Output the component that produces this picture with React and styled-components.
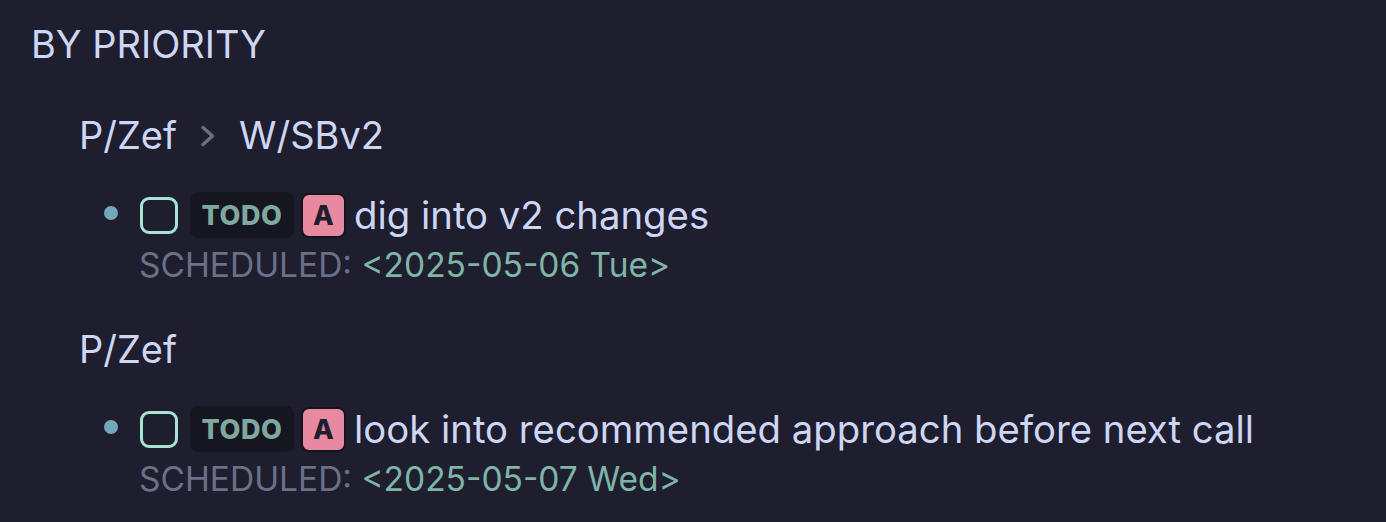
import React from "react";
import styled, { createGlobalStyle } from "styled-components";

const Global = createGlobalStyle`
  html, body { margin: 0; padding: 0; background: #1e1e2e; }
  body { font-family: Inter, "Noto Sans", sans-serif; color: #cdd6f4; }
`;

const Page = styled.div`
  width: 1386px;
  height: 522px;
  box-sizing: border-box;
  padding: 21px 0 0 31px;
  background: #1e1e2e;
  overflow: hidden;
`;

const Heading = styled.h2`
  margin: 0;
  font-size: 38px;
  font-weight: 400;
  line-height: 46px;
  color: #cdd6f4;
`;

const Group = styled.section`
  margin-top: ${(p) => p.$top}px;
  padding-left: 48px;
`;

const GroupTitle = styled.div`
  display: flex;
  align-items: center;
  gap: 23px;
  font-size: 38px;
  line-height: 46px;
  color: #cdd6f4;
`;

const Chevron = styled.svg`
  width: 16px;
  height: 24px;
  margin-top: 2px;
  color: #6c7086;
`;

const Task = styled.div`
  margin-top: 34px;
  padding-left: 25px;
`;

const TaskRow = styled.div`
  display: flex;
  align-items: center;
  height: 46px;
`;

const Bullet = styled.span`
  width: 14px;
  height: 14px;
  border-radius: 50%;
  background: #74a7b9;
  margin: 0 22px 4px 0;
`;

const Checkbox = styled.span`
  box-sizing: border-box;
  width: 38px;
  height: 37px;
  border: 3.5px solid #a6e3d5;
  border-radius: 9px;
  margin-right: 12px;
`;

const TodoBadge = styled.span`
  display: flex;
  align-items: center;
  justify-content: center;
  width: 104px;
  height: 46px;
  border-radius: 8px;
  background: #161621;
  color: #7fa99f;
  font-size: 27px;
  font-weight: 800;
  letter-spacing: 0.6px;
  margin-right: 7px;
`;

const PriorityBadge = styled.span`
  box-sizing: border-box;
  display: flex;
  align-items: center;
  justify-content: center;
  width: 45px;
  height: 45px;
  border-radius: 8px;
  background: #e78aa0;
  border: 2px solid #151520;
  color: #1e1e2e;
  font-size: 27px;
  font-weight: 800;
  margin-right: 8px;
`;

const TaskText = styled.span`
  font-size: 38.3px;
  line-height: 46px;
  color: #cdd6f4;
  white-space: nowrap;
`;

const Scheduled = styled.div`
  padding-left: 35px;
  margin-top: 7px;
  font-size: 33.5px;
  line-height: 40px;
  color: #6c7086;
  white-space: nowrap;
`;

const DateText = styled.span`
  color: #7fb5a6;
`;

const ChevronIcon = () => (
  <Chevron viewBox="0 0 16 24" fill="none" stroke="currentColor" strokeWidth="3.4" strokeLinecap="round" strokeLinejoin="round">
    <path d="M3 3.5l9.5 8.5-9.5 8.5" />
  </Chevron>
);

const TaskItem = ({ text, date }) => (
  <Task>
    <TaskRow>
      <Bullet />
      <Checkbox />
      <TodoBadge>TODO</TodoBadge>
      <PriorityBadge>A</PriorityBadge>
      <TaskText>{text}</TaskText>
    </TaskRow>
    <Scheduled>
      SCHEDULED: <DateText>&lt;{date}&gt;</DateText>
    </Scheduled>
  </Task>
);

export default function App() {
  return (
    <Page>
      <Global />
      <Heading>BY PRIORITY</Heading>
      <Group $top={45}>
        <GroupTitle>
          <span>P/Zef</span>
          <ChevronIcon />
          <span>W/SBv2</span>
        </GroupTitle>
        <TaskItem text="dig into v2 changes" date="2025-05-06 Tue" />
      </Group>
      <Group $top={41}>
        <GroupTitle>
          <span>P/Zef</span>
        </GroupTitle>
        <TaskItem text="look into recommended approach before next call" date="2025-05-07 Wed" />
      </Group>
    </Page>
  );
}
